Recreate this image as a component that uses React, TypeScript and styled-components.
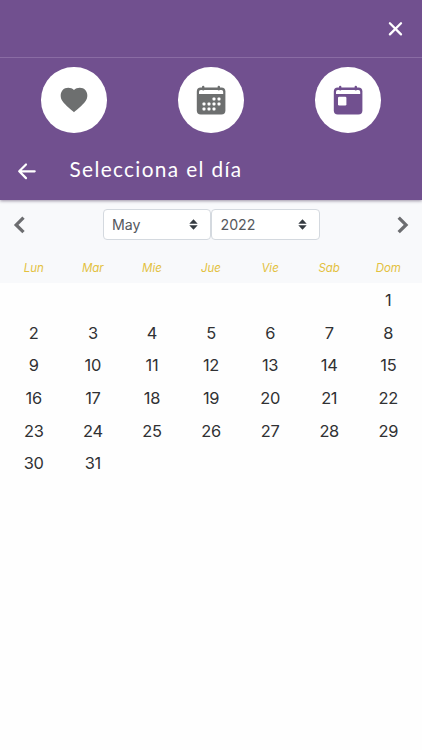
import React from "react";
import styled, { createGlobalStyle } from "styled-components";

const GlobalStyle = createGlobalStyle`
  * { box-sizing: border-box; }
  body { margin: 0; background: #fefefe; font-family: Inter, "Liberation Sans", sans-serif; }
  button { appearance: none; border: 0; background: none; padding: 0; font: inherit; color: inherit; }
  svg { display: block; }
`;

const Screen = styled.main`
  min-height: 100vh;
  display: flex;
  flex-direction: column;
`;

const Header = styled.header`
  height: 200px;
  background: #71508f;
  color: #fff;
  box-shadow: 0 1px 3px rgba(40, 20, 60, 0.45);
  position: relative;
`;

const TopBar = styled.div`
  height: 58px;
  padding-right: 16px;
  border-bottom: 1px solid #8a6ca4;
  display: flex;
  align-items: center;
  justify-content: flex-end;
`;

const Tabs = styled.nav`
  height: 84px;
  padding: 0 41px;
  display: flex;
  align-items: center;
  justify-content: space-between;
`;

const RoundButton = styled.button<{ $active?: boolean }>`
  width: 65.6px;
  height: 65.6px;
  border-radius: 50%;
  background: #fff;
  color: ${(p) => (p.$active ? "#71508f" : "#6d6f6f")};
  display: grid;
  place-items: center;
`;

const TitleRow = styled.div`
  height: 58px;
  padding-left: 17px;
  display: flex;
  align-items: center;
`;

const Title = styled.h1`
  margin: 0 0 4px 32.5px;
  font: 400 20.8px/28px Lato, sans-serif;
  letter-spacing: 1.35px;
`;

const CalendarHead = styled.section`
  height: 83px;
  background: #f8f9fb;
`;

const Navigation = styled.div`
  height: 49px;
  padding: 0 13px;
  display: flex;
  align-items: center;
  justify-content: space-between;
  color: #6c6d70;
`;

const Selects = styled.div`
  display: flex;
`;

const SelectBox = styled.button`
  width: 108.5px;
  height: 31px;
  padding: 0 12px 0 8.5px;
  border: 1px solid #d4d9df;
  border-radius: 4px;
  background: #fff;
  color: #55585d;
  font-size: 14.2px;
  letter-spacing: 0;
  display: flex;
  align-items: center;
  justify-content: space-between;
`;

const Week = styled.div`
  display: grid;
  grid-template-columns: repeat(7, 59.1px);
  justify-content: center;
  text-align: center;
`;

const WeekLabels = styled(Week)`
  height: 38px;
  align-items: center;
  color: #e3c13f;
  font-size: 11.5px;
  font-style: italic;
`;

const Days = styled(Week)`
  padding-top: 1px;
  grid-auto-rows: 32.7px;
  color: #303133;
  font-size: 16.4px;
  letter-spacing: -0.3px;
`;

const Day = styled.span<{ $column?: number }>`
  grid-column: ${(p) => p.$column ?? "auto"};
  line-height: 32.7px;
`;

const CloseIcon = () => (
  <svg width="21" height="21" viewBox="0 0 21 21" fill="none" stroke="currentColor" strokeWidth="2.3" strokeLinecap="round">
    <path d="M4.9 5.3 16 16.4M16 5.3 4.9 16.4" />
  </svg>
);

const HeartIcon = () => (
  <svg width="28" height="26" viewBox="0 0 28 26" fill="currentColor">
    <path d="M14 25.2C11.8 23.6 5.4 18.5 2.4 14.1.1 10.7.1 6.1 2.5 3.2 5.6-.2 11.3.3 14 3.1 16.7.3 22.4-.2 25.5 3.2c2.4 2.9 2.4 7.5.1 10.9-3 4.4-9.4 9.5-11.6 11.1Z" />
  </svg>
);

const monthDots = [
  [18, 14], [23, 14],
  [8, 19], [13, 19], [18, 19], [23, 19],
  [8, 24], [13, 24], [18, 24],
];

const CalendarIcon = ({ single = false }: { single?: boolean }) => (
  <svg width="30" height="30" viewBox="0 0 30 30">
    <rect x=".8" y="2.6" width="28.6" height="26.9" rx="4" fill="currentColor" />
    <path d="M3 9V6.7Q3 4.9 4.8 4.9H25.4Q27.2 4.9 27.2 6.7V9Z" fill="#fff" />
    <path d="M7.2 2v2.2M22.8 2v2.2" stroke="currentColor" strokeWidth="2.4" strokeLinecap="round" />
    {single ? (
      <rect x="5" y="11.7" width="8.4" height="8.8" rx="1.2" fill="#fff" />
    ) : (
      monthDots.map(([x, y]) => <rect key={`${x}-${y}`} x={x - 1.5} y={y - 1.5} width="3" height="3" rx=".9" fill="#fff" />)
    )}
  </svg>
);

const BackIcon = () => (
  <svg width="20" height="20" viewBox="0 0 20 20" fill="none" stroke="currentColor" strokeWidth="2.2" strokeLinecap="round" strokeLinejoin="round">
    <path d="M17.7 10.3H2.2M9 3.5 2.2 10.3 9 17.1" />
  </svg>
);

const Chevron = ({ next = false }: { next?: boolean }) => (
  <svg width="13" height="18" viewBox="0 0 13 18" fill="none" stroke="currentColor" strokeWidth="3.3">
    <path d={next ? "M2.7 1.6 10 8.9 2.7 16.2" : "M10.5 1.6 3.2 8.9 10.5 16.2"} />
  </svg>
);

const Carets = () => (
  <svg width="9" height="11" viewBox="0 0 9 11" fill="#343a40">
    <path d="M.3 4.7 4.5.2 8.7 4.7ZM.3 6.3 4.5 10.8 8.7 6.3Z" />
  </svg>
);

const Select = ({ value }: { value: string }) => (
  <SelectBox>
    <span>{value}</span>
    <Carets />
  </SelectBox>
);

const weekdays = ["Lun", "Mar", "Mie", "Jue", "Vie", "Sab", "Dom"];
const days = Array.from({ length: 31 }, (_, index) => index + 1);

export default function App() {
  return (
    <Screen>
      <GlobalStyle />
      <Header>
        <TopBar>
          <button aria-label="Cerrar"><CloseIcon /></button>
        </TopBar>
        <Tabs>
          <RoundButton aria-label="Favoritos"><HeartIcon /></RoundButton>
          <RoundButton aria-label="Mes"><CalendarIcon /></RoundButton>
          <RoundButton aria-label="Día" $active><CalendarIcon single /></RoundButton>
        </Tabs>
        <TitleRow>
          <button aria-label="Volver"><BackIcon /></button>
          <Title>Selecciona el día</Title>
        </TitleRow>
      </Header>
      <CalendarHead>
        <Navigation>
          <button aria-label="Mes anterior"><Chevron /></button>
          <Selects>
            <Select value="May" />
            <Select value="2022" />
          </Selects>
          <button aria-label="Mes siguiente"><Chevron next /></button>
        </Navigation>
        <WeekLabels>
          {weekdays.map((name) => <span key={name}>{name}</span>)}
        </WeekLabels>
      </CalendarHead>
      <Days>
        {days.map((day) => <Day key={day} $column={day === 1 ? 7 : undefined}>{day}</Day>)}
      </Days>
    </Screen>
  );
}
